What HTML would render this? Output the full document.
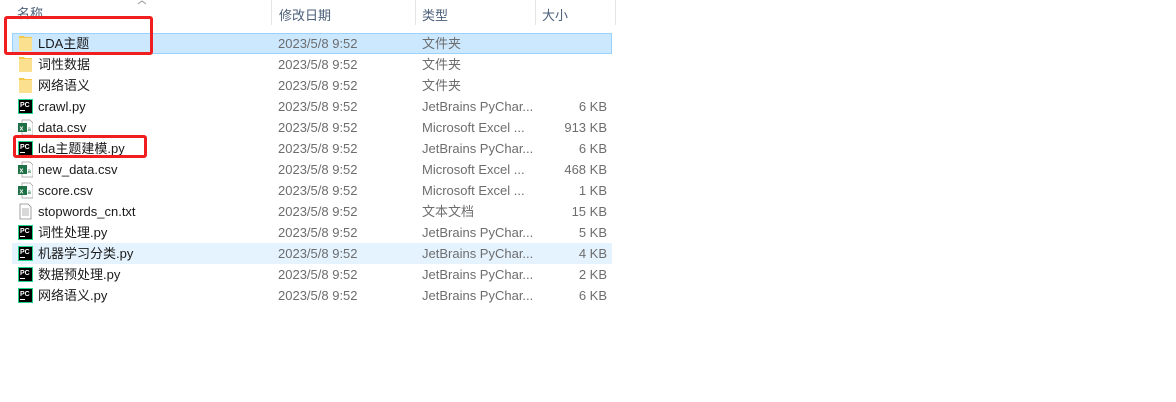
<!DOCTYPE html>
<html><head><meta charset="utf-8"><style>
body{margin:0;width:1176px;height:402px;background:#fff;position:relative;overflow:hidden;font-family:"Liberation Sans","Noto Sans CJK SC",sans-serif;font-size:13px}
.h{position:absolute;top:5px;color:#4c607a;font-size:13px}
.sep{position:absolute;top:0;width:1px;height:25px;background:#e5e5e5}
.row{position:absolute;left:12px;width:600px;height:21px;box-sizing:border-box}
.c{position:absolute;top:3px;white-space:nowrap;line-height:15px}
.n{left:26px;color:#1a1a1a}
.d{left:266px;color:#6d6d6d}
.t{left:410px;color:#6d6d6d}
.s{right:5px;color:#6d6d6d}
.ic{position:absolute;left:6px;top:2px;width:15px;height:17px}
.red{position:absolute;border:3px solid #f01e1e;border-radius:3px;box-sizing:border-box}
</style></head><body>
<div class="h" style="left:17px;top:3px">名称</div>
<svg style="position:absolute;left:137px;top:0" width="10" height="5"><path d="M1 4 L5 1 L9 4" stroke="#999" fill="none"/></svg>
<div class="sep" style="left:271px"></div>
<div class="h" style="left:279px">修改日期</div>
<div class="sep" style="left:415px"></div>
<div class="h" style="left:422px">类型</div>
<div class="sep" style="left:535px"></div>
<div class="h" style="left:542px">大小</div>
<div class="sep" style="left:615px"></div>

<div class="row" style="top:33px;background:#cce8ff;border:1px solid #99d1ff"></div>
<div class="row" style="top:243px;background:#e5f3ff"></div>

<div class="row" style="top:33px"><svg class="ic" viewBox="0 0 15 17"><path d="M1 1h5l1 1h7v14H1z" fill="#f5c84c"/><rect x="1" y="3" width="13" height="13" fill="#fbe08f"/></svg><span class="c n">LDA主题</span><span class="c d">2023/5/8 9:52</span><span class="c t">文件夹</span></div>
<div class="row" style="top:54px"><svg class="ic" viewBox="0 0 15 17"><path d="M1 1h5l1 1h7v14H1z" fill="#f5c84c"/><rect x="1" y="3" width="13" height="13" fill="#fbe08f"/></svg><span class="c n">词性数据</span><span class="c d">2023/5/8 9:52</span><span class="c t">文件夹</span></div>
<div class="row" style="top:75px"><svg class="ic" viewBox="0 0 15 17"><path d="M1 1h5l1 1h7v14H1z" fill="#f5c84c"/><rect x="1" y="3" width="13" height="13" fill="#fbe08f"/></svg><span class="c n">网络语义</span><span class="c d">2023/5/8 9:52</span><span class="c t">文件夹</span></div>
<div class="row" style="top:96px"><svg class="ic" viewBox="0 0 15 17"><rect x="0" y="1" width="15" height="15" fill="#21d789"/><rect x="1" y="2" width="13" height="13" fill="#000"/><text x="2" y="9" fill="#fff" font-size="7" font-weight="bold" font-family="Liberation Sans">PC</text><rect x="2" y="12" width="5" height="1" fill="#fff"/></svg><span class="c n">crawl.py</span><span class="c d">2023/5/8 9:52</span><span class="c t">JetBrains PyChar...</span><span class="c s">6 KB</span></div>
<div class="row" style="top:117px"><svg class="ic" viewBox="0 0 15 17"><path d="M4 1h8l3 3v12H4z" fill="#fff" stroke="#999" stroke-width=".7"/><rect x="0" y="4" width="9" height="9" fill="#1e7145"/><text x="1.5" y="11.5" fill="#fff" font-size="7" font-weight="bold" font-family="Liberation Sans">x</text><text x="9.5" y="12" fill="#1e7145" font-size="6" font-family="Liberation Sans">a</text></svg><span class="c n">data.csv</span><span class="c d">2023/5/8 9:52</span><span class="c t">Microsoft Excel ...</span><span class="c s">913 KB</span></div>
<div class="row" style="top:138px"><svg class="ic" viewBox="0 0 15 17"><rect x="0" y="1" width="15" height="15" fill="#21d789"/><rect x="1" y="2" width="13" height="13" fill="#000"/><text x="2" y="9" fill="#fff" font-size="7" font-weight="bold" font-family="Liberation Sans">PC</text><rect x="2" y="12" width="5" height="1" fill="#fff"/></svg><span class="c n">lda主题建模.py</span><span class="c d">2023/5/8 9:52</span><span class="c t">JetBrains PyChar...</span><span class="c s">6 KB</span></div>
<div class="row" style="top:159px"><svg class="ic" viewBox="0 0 15 17"><path d="M4 1h8l3 3v12H4z" fill="#fff" stroke="#999" stroke-width=".7"/><rect x="0" y="4" width="9" height="9" fill="#1e7145"/><text x="1.5" y="11.5" fill="#fff" font-size="7" font-weight="bold" font-family="Liberation Sans">x</text><text x="9.5" y="12" fill="#1e7145" font-size="6" font-family="Liberation Sans">a</text></svg><span class="c n">new_data.csv</span><span class="c d">2023/5/8 9:52</span><span class="c t">Microsoft Excel ...</span><span class="c s">468 KB</span></div>
<div class="row" style="top:180px"><svg class="ic" viewBox="0 0 15 17"><path d="M4 1h8l3 3v12H4z" fill="#fff" stroke="#999" stroke-width=".7"/><rect x="0" y="4" width="9" height="9" fill="#1e7145"/><text x="1.5" y="11.5" fill="#fff" font-size="7" font-weight="bold" font-family="Liberation Sans">x</text><text x="9.5" y="12" fill="#1e7145" font-size="6" font-family="Liberation Sans">a</text></svg><span class="c n">score.csv</span><span class="c d">2023/5/8 9:52</span><span class="c t">Microsoft Excel ...</span><span class="c s">1 KB</span></div>
<div class="row" style="top:201px"><svg class="ic" viewBox="0 0 15 17"><path d="M2 1h8l3 3v12H2z" fill="#fff" stroke="#888" stroke-width=".8"/><path d="M4 6h7M4 8h7M4 10h7M4 12h7" stroke="#999" stroke-width=".8"/></svg><span class="c n">stopwords_cn.txt</span><span class="c d">2023/5/8 9:52</span><span class="c t">文本文档</span><span class="c s">15 KB</span></div>
<div class="row" style="top:222px"><svg class="ic" viewBox="0 0 15 17"><rect x="0" y="1" width="15" height="15" fill="#21d789"/><rect x="1" y="2" width="13" height="13" fill="#000"/><text x="2" y="9" fill="#fff" font-size="7" font-weight="bold" font-family="Liberation Sans">PC</text><rect x="2" y="12" width="5" height="1" fill="#fff"/></svg><span class="c n">词性处理.py</span><span class="c d">2023/5/8 9:52</span><span class="c t">JetBrains PyChar...</span><span class="c s">5 KB</span></div>
<div class="row" style="top:243px"><svg class="ic" viewBox="0 0 15 17"><rect x="0" y="1" width="15" height="15" fill="#21d789"/><rect x="1" y="2" width="13" height="13" fill="#000"/><text x="2" y="9" fill="#fff" font-size="7" font-weight="bold" font-family="Liberation Sans">PC</text><rect x="2" y="12" width="5" height="1" fill="#fff"/></svg><span class="c n">机器学习分类.py</span><span class="c d">2023/5/8 9:52</span><span class="c t">JetBrains PyChar...</span><span class="c s">4 KB</span></div>
<div class="row" style="top:264px"><svg class="ic" viewBox="0 0 15 17"><rect x="0" y="1" width="15" height="15" fill="#21d789"/><rect x="1" y="2" width="13" height="13" fill="#000"/><text x="2" y="9" fill="#fff" font-size="7" font-weight="bold" font-family="Liberation Sans">PC</text><rect x="2" y="12" width="5" height="1" fill="#fff"/></svg><span class="c n">数据预处理.py</span><span class="c d">2023/5/8 9:52</span><span class="c t">JetBrains PyChar...</span><span class="c s">2 KB</span></div>
<div class="row" style="top:285px"><svg class="ic" viewBox="0 0 15 17"><rect x="0" y="1" width="15" height="15" fill="#21d789"/><rect x="1" y="2" width="13" height="13" fill="#000"/><text x="2" y="9" fill="#fff" font-size="7" font-weight="bold" font-family="Liberation Sans">PC</text><rect x="2" y="12" width="5" height="1" fill="#fff"/></svg><span class="c n">网络语义.py</span><span class="c d">2023/5/8 9:52</span><span class="c t">JetBrains PyChar...</span><span class="c s">6 KB</span></div>

<div class="red" style="left:4px;top:16px;width:149px;height:39px"></div>
<div class="red" style="left:13px;top:135px;width:134px;height:23px"></div>
</body></html>
